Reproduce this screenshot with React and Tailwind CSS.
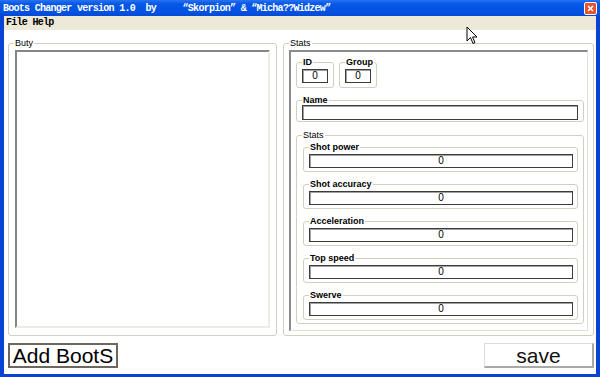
import clsx from "clsx";

const mono = "font-['Liberation_Mono',monospace]";
const sans = "font-['Liberation_Sans',Arial,sans-serif]";

const stats = ["Shot power", "Shot accuracy", "Acceleration", "Top speed", "Swerve"];

function Group({ label, bold, className, children }) {
    return (
        <fieldset className={clsx("min-w-0 rounded-[3px] border border-[#d0d0bf]", className)}>
            <legend
                className={clsx(
                    "ml-[5px] px-[1px] text-[9px] leading-[10px] text-black",
                    bold && "font-bold"
                )}
            >
                {label}
            </legend>
            {children}
        </fieldset>
    );
}

function Field({ className, children }) {
    return (
        <div
            className={clsx(
                "flex items-center justify-center border border-[#3c3c3c] bg-white text-[10px] leading-none text-black shadow-[inset_1px_1px_0_#a0a0a0]",
                className
            )}
        >
            {children}
        </div>
    );
}

const App = () => {
    return (
        <div className={clsx("relative flex h-[377px] w-[600px] flex-col overflow-hidden bg-[#0843d6]", sans)}>
            {/* title bar */}
            <div className="flex h-[16px] items-center justify-between bg-[linear-gradient(#2a72f2,#0558e6_25%,#0452e2_75%,#0349d4)] pl-[3px] pr-[3px]">
                <span
                    className={clsx(
                        "whitespace-pre pt-[1px] text-[10px] font-bold leading-[15px] tracking-[-0.72px] text-white",
                        mono
                    )}
                >
                    {"Boots Changer version 1.0  by     “Skorpion” & “Micha??Widzew”"}
                </span>
                <div className="flex h-[13px] w-[13px] items-center justify-center rounded-[2px] border border-white bg-[#e2552f]">
                    <svg width="7" height="7" viewBox="0 0 7 7">
                        <path d="M1 1 L6 6 M6 1 L1 6" stroke="white" strokeWidth="1.6" />
                    </svg>
                </div>
            </div>

            {/* menu */}
            <div className="mx-[4px] flex h-[14px] items-center bg-[#ece9d8] pl-[2px]">
                <span
                    className={clsx(
                        "whitespace-pre text-[10px] font-bold leading-[14px] tracking-[-0.72px] text-black",
                        mono
                    )}
                >
                    File Help
                </span>
            </div>

            {/* client */}
            <div className="mx-[4px] mb-[3px] flex flex-1 flex-col bg-white pb-[6px] pl-[4px] pr-[2px] pt-[8px]">
                <div className="flex flex-1 gap-[6px]">
                    <Group label="Buty" className="flex w-[269px] flex-col">
                        <div className="mx-[6px] mb-[7px] mt-[2px] flex-1 border-2 border-b-[#ecebe4] border-l-[#858585] border-r-[#ecebe4] border-t-[#858585] bg-white" />
                    </Group>

                    <Group label="Stats" className="flex flex-1 flex-col">
                        <div className="mb-[4px] ml-[5px] mr-[5px] mt-[2px] flex flex-1 flex-col border-b border-l-2 border-r border-t-2 border-b-[#e4e2d8] border-l-[#8a8a8a] border-r-[#e4e2d8] border-t-[#8a8a8a] pl-[5px] pr-[3px] pt-[5px]">
                            <div className="flex gap-[5px]">
                                <Group label="ID" bold className="w-[38px]">
                                    <Field className="mb-[4px] ml-[5px] mt-[2px] h-[14px] w-[26px]">0</Field>
                                </Group>
                                <Group label="Group" bold className="w-[38px]">
                                    <Field className="mb-[4px] ml-[5px] mt-[2px] h-[14px] w-[26px]">0</Field>
                                </Group>
                            </div>

                            <Group label="Name" bold className="mt-[7px]">
                                <Field className="mb-[1px] ml-[5px] mr-[5px] h-[15px]" />
                            </Group>

                            <Group label="Stats" className="mt-[8px]">
                                <div className="flex flex-col gap-[7px] pb-[3px] pl-[6px] pr-[5px] pt-[2px]">
                                    {stats.map((s) => (
                                        <Group key={s} label={s} bold>
                                            <Field className="mb-[3px] ml-[5px] mr-[4px] mt-[2px] h-[14px]">0</Field>
                                        </Group>
                                    ))}
                                </div>
                            </Group>
                        </div>
                    </Group>
                </div>

                <div className="mt-[7px] flex h-[25px] justify-between">
                    <button className="flex w-[110px] items-center justify-center border-2 border-[#6b675e] bg-white text-[21px] leading-none text-black">
                        Add BootS
                    </button>
                    <button className="flex w-[110px] items-center justify-center border-b-2 border-l border-r-2 border-t border-b-[#a9a9a9] border-l-[#dcdcdc] border-r-[#a9a9a9] border-t-[#dcdcdc] bg-white text-[21px] leading-none text-[#111]">
                        save
                    </button>
                </div>
            </div>

            {/* mouse pointer */}
            <svg className="absolute left-[466px] top-[26px]" width="13" height="20" viewBox="0 0 13 20">
                <path
                    d="M1 1 L1 15 L4.5 11.5 L7 17.5 L9 16.6 L6.6 11 L11 11 Z"
                    fill="white"
                    stroke="black"
                    strokeWidth="1"
                    strokeLinejoin="miter"
                />
            </svg>
        </div>
    );
};

export default App;
